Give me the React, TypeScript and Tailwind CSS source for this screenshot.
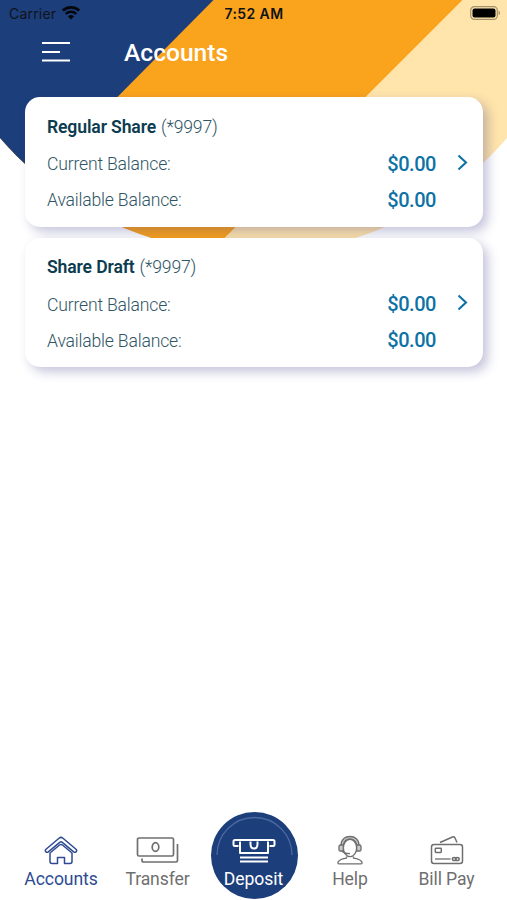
import React from "react";

function StatusBar() {
  return (
    <div className="flex h-[28px] items-center justify-between pl-[9px] pr-[6px] font-['Inter',sans-serif] text-[14px] text-[#10131a]">
      <div className="flex w-[150px] items-center gap-[6px]">
        <span className="pb-px tracking-[0.2px]">Carrier</span>
        <svg className="-mt-[2px]" width="18" height="14" viewBox="0 0 18 14" fill="none">
          <path d="M.8 4.6a12 12 0 0 1 16.4 0" stroke="#05070c" strokeWidth="2.7" />
          <path d="M3.8 7.8a7.6 7.6 0 0 1 10.4 0" stroke="#05070c" strokeWidth="2.5" />
          <path d="M9 13.5 6 10.4a4.4 4.4 0 0 1 6 0z" fill="#05070c" />
        </svg>
      </div>
      <span className="-ml-[2px] pb-px font-semibold tracking-[0.4px]">7:52 AM</span>
      <div className="-mt-[2px] flex w-[150px] justify-end">
        <svg width="31" height="14" viewBox="0 0 31 14" fill="none">
          <rect x=".7" y=".7" width="26.6" height="12.6" rx="3.6" stroke="#a3926d" strokeWidth="1.2" />
          <rect x="2.5" y="2.5" width="23" height="9" rx="2" fill="#000" />
          <path d="M28.6 4.8c1.9.7 1.9 3.700 0 4.400z" fill="#a3926d" />
        </svg>
      </div>
    </div>
  );
}

function Card({ name }: { name: string }) {
  return (
    <section className="relative h-[129.500px] rounded-[15px] bg-white pl-[22px] pr-[14px] pt-[11px] text-[17.600px] font-light tracking-[-0.19px] text-[#2f5565] shadow-[5px_5px_11px_rgba(50,45,130,0.28)]">
      <h2 className="flex h-[37px] items-center gap-[5px]">
        <b className="font-semibold tracking-[-0.14px] text-[#0b3c50]">{name}</b>
        <span>(*9997)</span>
      </h2>
      <div className="flex h-[36px] items-center">
        <span className="grow pt-[2px]">Current Balance:</span>
        <span className="pt-px text-[20px] font-medium tracking-[-0.450px] text-[#0e72a5]">$0.00</span>
        <svg className="-mt-px ml-[21px]" width="12" height="18" viewBox="0 0 12 18" fill="none" stroke="#0e72a5" strokeWidth="2.100">
          <path d="m1.500 1.500 7.500 7-7.500 7" />
        </svg>
      </div>
      <div className="flex h-[36px] items-center">
        <span className="grow pt-[2px]">Available Balance:</span>
        <span className="mr-[33px] pt-px text-[20px] font-medium tracking-[-0.450px] text-[#0e72a5]">$0.00</span>
      </div>
    </section>
  );
}

const icons = {
  home: (
    <svg width="34" height="29" viewBox="0 0 34 29" fill="none" stroke="currentColor" strokeWidth="1.500" strokeLinejoin="round">
      <path d="M2 13.200 15 2.200q2-1.700 4 0l13 11q1.400 1.300.2 2.500-1.100 1.200-2.500.1L18.300 6.300q-1.300-1-2.600 0L4.300 15.800q-1.400 1.100-2.500-.1-1.200-1.200.2-2.500z" />
      <path d="M6 17 15.500 9q1.500-1.200 3 0L28 17v8.500q0 2-2 2h-5.500v-6h-7v6H8q-2 0-2-2z" />
    </svg>
  ),
  transfer: (
    <svg width="44" height="29" viewBox="0 0 44 29" fill="none" stroke="currentColor" strokeWidth="1.700">
      <rect x="1.500" y="2" width="36" height="18" rx="1.500" />
      <ellipse cx="19.500" cy="11" rx="3.300" ry="4.400" />
      <path d="M41.500 8v16.500q0 1.500-1.500 1.500H7.500q-1.500 0-1.500-2v-1.500" />
    </svg>
  ),
  help: (
    <svg width="26" height="30" viewBox="0 0 26 30" fill="none" stroke="currentColor" strokeWidth="1.300" strokeLinejoin="round">
      <path d="M4 10.500C4 4.500 8 1.500 13 1.500s9 3 9 9h-2c-1-4-3.500-6.500-7-6.500s-6 2.500-7 6.500z" fill="#c9c9ca" />
      <ellipse cx="13" cy="13" rx="6.600" ry="8.700" />
      <path d="M6.300 10H3.500q-1.500 0-1.500 1.500v3.200Q2 16 3.500 16h2.800zM19.700 10h2.800q1.500 0 1.500 1.500v3.200q0 1.300-1.500 1.300h-2.800z" fill="#c9c9ca" />
      <path d="M5 16q2.500 3 8 2.500" />
      <path d="M9.500 21.500v1.700q-6.500.8-8.500 4-.4 1.700 1 1.700h22q1.400 0 1-1.700-2-3.200-8.500-4v-1.700" />
    </svg>
  ),
  bill: (
    <svg width="34" height="30" viewBox="0 0 34 30" fill="none" stroke="currentColor" strokeWidth="1.500" strokeLinejoin="round">
      <rect x="1.500" y="9.500" width="31" height="19" rx="2.500" />
      <path d="M10 7.500 22.500 2q1.600-.6 2.400.8L27 7.500" />
      <rect x="5.300" y="13.200" width="6" height="4.300" rx=".7" />
      <path d="M5 24h15.500" strokeWidth="1.300" />
      <ellipse cx="24.300" cy="24" rx="1.900" ry="1.600" />
      <ellipse cx="27.300" cy="24" rx="1.900" ry="1.600" />
    </svg>
  ),
};

function Tab({ icon, label, className }: { icon: React.ReactNode; label: string; className: string }) {
  return (
    <div className={`flex shrink-0 flex-col items-center text-[17.600px] leading-[22px] ${className}`}>
      <div className="flex h-[30px] items-end">{icon}</div>
      <span className="mt-[3px] whitespace-nowrap tracking-[-0.1px]">{label}</span>
    </div>
  );
}

export default function App() {
  return (
    <div className="relative isolate flex h-[900px] w-[507px] flex-col overflow-hidden bg-white font-['Roboto',sans-serif]">
      <svg className="absolute inset-0 -z-10" width="507" height="260" viewBox="0 0 507 260">
        <clipPath id="dome"><circle cx="253.500" cy="-81" r="335" /></clipPath>
        <g clipPath="url(#dome)">
          <path d="M0 0h507v260H0z" fill="#ffe4ab" />
          <path d="M0 0h462.500l-260 260H0z" fill="#faa31c" />
          <path d="M0 0h213.500l-215 217z" fill="#1c3e7b" />
        </g>
      </svg>
      <StatusBar />
      <header className="flex h-[69.300px] items-start pl-[42px]">
        <svg className="mt-[13px]" width="29" height="22" viewBox="0 0 29 22" stroke="#fff" strokeWidth="1.800">
          <path d="M0 2h28M0 11h18M0 19.500h28" />
        </svg>
        <h1 className="ml-[53px] mt-[7px] text-[24.600px] font-medium leading-[36px] text-white">Accounts</h1>
      </header>
      <main className="ml-[25px] flex w-[458px] grow flex-col gap-[11px]">
        <Card name="Regular Share" />
        <Card name="Share Draft" />
      </main>
      <nav className="flex h-[88px] items-start text-[#6f6f70]">
        <Tab icon={icons.home} label="Accounts" className="ml-[13px] mt-[23px] w-[96px] text-[#2e4b92]" />
        <Tab icon={icons.transfer} label="Transfer" className="mt-[23px] w-[97px]" />
        <div className="ml-[5px] flex size-[87px] shrink-0 flex-col items-center rounded-full bg-[#1c3e7b] text-white">
          <svg width="87" height="54" viewBox="0 0 87 54" fill="none">
            <path d="M6 43a37.500 37.500 0 0 1 75 0" stroke="#4b68a0" strokeWidth="1.300" />
            <g stroke="currentColor" strokeWidth="2" strokeLinejoin="round" transform="translate(-.5 -.5)">
              <path d="M28 34.500h-3.500q-1.500 0-1.500-1.500v-3q0-1.500 1.500-1.500h38Q64 28.500 64 30v3q0 1.500-1.500 1.500H59" />
              <path d="M29.500 30v11.500h28V30M40 30v2.500q0 4.500 3.500 4.500t3.500-4.500V30M29.500 46h28M29.500 50h28" />
            </g>
          </svg>
          <span className="mt-[2px] pr-[2px] text-[17.600px] leading-[22px] tracking-[-0.05px]">Deposit</span>
        </div>
        <Tab icon={icons.help} label="Help" className="ml-[4px] mt-[23px] w-[96px]" />
        <Tab icon={icons.bill} label="Bill Pay" className="mt-[23px] w-[97px]" />
      </nav>
    </div>
  );
}
